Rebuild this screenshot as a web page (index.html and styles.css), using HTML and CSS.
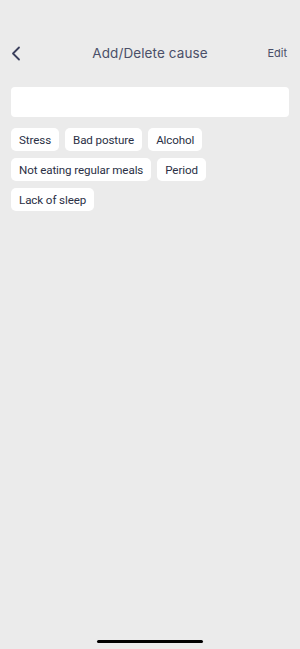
FILE: index.html
```html
<!DOCTYPE html>
<html>
<head>
<meta charset="utf-8">
<link rel="stylesheet" href="styles.css">
</head>
<body>
<div class="screen">
  <header class="nav">
    <span class="back">
      <svg width="10" height="15" viewBox="0 0 10 15"><path d="M8 1.5 L2 7.5 L8 13.5" fill="none" stroke="#3a3f5c" stroke-width="1.8" stroke-linecap="round" stroke-linejoin="round"/></svg>
    </span>
    <h1 class="title">Add/Delete cause</h1>
    <span class="edit">Edit</span>
  </header>
  <div class="input"></div>
  <div class="chips">
    <span class="chip">Stress</span>
    <span class="chip">Bad posture</span>
    <span class="chip">Alcohol</span>
    <span class="chip">Not eating regular meals</span>
    <span class="chip">Period</span>
    <span class="chip">Lack of sleep</span>
  </div>
  <div class="spacer"></div>
  <div class="home"></div>
</div>
</body>
</html>
```
FILE: styles.css
```css
* { box-sizing: border-box; }
html, body { margin: 0; padding: 0; }
body {
  background: #ebebeb;
  font-family: "Inter", "Open Sans", sans-serif;
  color: #2a2f45;
}
.screen {
  width: 300px;
  height: 649px;
  display: flex;
  flex-direction: column;
  padding: 0 11px;
}
.nav {
  height: 38px;
  margin-top: 34px;
  display: flex;
  align-items: center;
  justify-content: space-between;
  position: relative;
}
.back { display: flex; width: 20px; margin-left: 0; }
.title {
  position: absolute;
  left: 0; right: 0;
  text-align: center;
  margin: 0;
  font-size: 13.5px;
  font-weight: 400;
  color: #4a4f68;
  letter-spacing: 0.1px;
  pointer-events: none;
}
.edit {
  font-size: 11px;
  color: #4a4f68;
  margin-right: 2px;
}
.input {
  margin-top: 15px;
  height: 30px;
  background: #fff;
  border-radius: 4px;
}
.chips {
  margin-top: 11px;
  display: flex;
  flex-wrap: wrap;
  gap: 7px 6px;
}
.chip {
  background: #fff;
  border-radius: 5px;
  height: 23px;
  padding: 0 8px;
  display: flex;
  align-items: center;
  font-family: "Roboto", sans-serif;
  font-size: 11.6px;
  letter-spacing: -0.1px;
  color: #2a2f45;
}
.spacer { flex: 1; }
.home {
  align-self: center;
  width: 106px;
  height: 3px;
  border-radius: 2px;
  background: #000;
  margin-bottom: 6px;
}
```
